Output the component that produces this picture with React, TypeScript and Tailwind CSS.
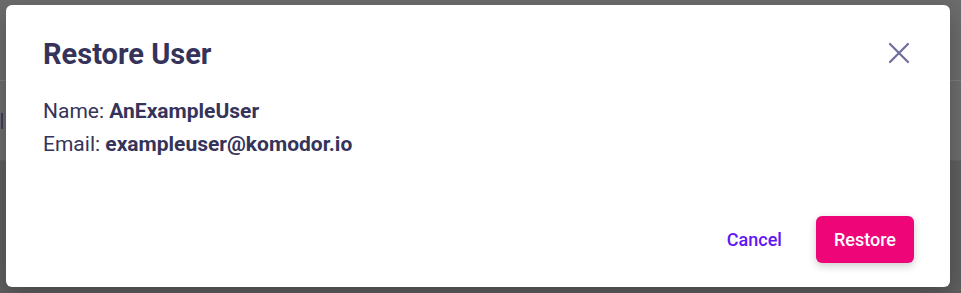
import React from 'react';

const Backdrop: React.FC = () => (
  <div className="flex flex-col h-full">
    <div className="h-[80px] bg-[#6c6c6c]" />
    <div className="h-px bg-[#7c7c7c]" />
    <div className="h-[79px] bg-[#6d6d6d] flex items-center">
      <div className="ml-[1px] w-[2px] h-[16px] bg-[#3d3f5c]" />
    </div>
    <div className="h-px bg-[#646464]" />
    <div className="flex-1 bg-[#5f5f60]" />
  </div>
);

const CloseIcon: React.FC = () => (
  <svg width="22" height="22" viewBox="0 0 22 22" fill="none">
    <path d="M2 2L20 20M20 2L2 20" stroke="#6f6d9d" strokeWidth="2.2" strokeLinecap="round" />
  </svg>
);

export default function App() {
  return (
    <div className="relative w-[961px] h-[293px] overflow-hidden font-['Roboto',sans-serif]">
      <Backdrop />
      <div className="absolute left-[6px] top-[5px] w-[944px] h-[282px] bg-white rounded-[6px] shadow-[0_8px_24px_rgba(0,0,0,0.25)] flex flex-col pl-[37px] pr-[36px]">
        <div className="flex items-start justify-between pt-[32px]">
          <h2 className="text-[29px] leading-[34px] font-bold text-[#35335a]">Restore User</h2>
          <button className="mt-[5px] mr-[4px]">
            <CloseIcon />
          </button>
        </div>
        <div className="mt-[24px] text-[21px] leading-[33px] text-[#35335a]">
          <div>
            Name: <span className="font-bold">AnExampleUser</span>
          </div>
          <div>
            Email: <span className="font-bold">exampleuser@komodor.io</span>
          </div>
        </div>
        <div className="flex-1" />
        <div className="flex items-center justify-end gap-[34px] pb-[24px]">
          <button className="text-[18px] font-medium text-[#6215f7]">Cancel</button>
          <button className="h-[47px] px-[18px] rounded-[6px] bg-[#ee0679] text-white text-[18px] font-medium shadow-[0_3px_8px_rgba(0,0,0,0.2)]">
            Restore
          </button>
        </div>
      </div>
    </div>
  );
}
